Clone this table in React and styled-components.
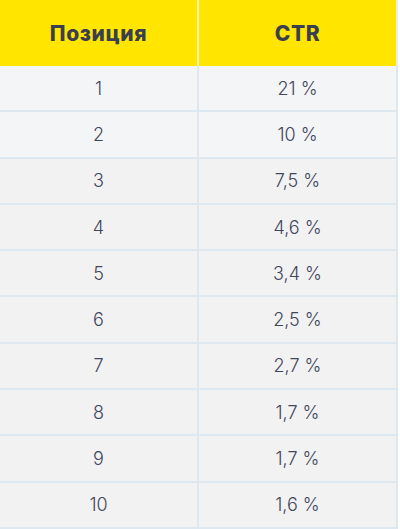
import React from 'react'
import styled, { createGlobalStyle } from 'styled-components'

const rows = [
  ['1', '21 %'],
  ['2', '10 %'],
  ['3', '7,5 %'],
  ['4', '4,6 %'],
  ['5', '3,4 %'],
  ['6', '2,5 %'],
  ['7', '2,7 %'],
  ['8', '1,7 %'],
  ['9', '1,7 %'],
  ['10', '1,6 %'],
]

const App = () => {
  return (
    <>
      <GlobalStyle />
      <Table>
        <HeadRow>
          <HeadCell>Позиция</HeadCell>
          <HeadCell last>CTR</HeadCell>
        </HeadRow>
        {rows.map(([pos, ctr], i) => (
          <Row key={pos} tinted={i < 2}>
            <Cell>{pos}</Cell>
            <Cell last>{ctr}</Cell>
          </Row>
        ))}
      </Table>
    </>
  )
}

const GlobalStyle = createGlobalStyle`
  body {
    margin: 0;
    background: #ffffff;
    font-family: Inter, 'Noto Sans', sans-serif;
  }
`

const Table = styled.div`
  width: 398px;
  display: flex;
  flex-direction: column;
`

const HeadRow = styled.div`
  display: grid;
  grid-template-columns: 199px 199px;
  height: 66px;
  background: #ffe500;
`

const HeadCell = styled.div`
  display: flex;
  align-items: center;
  justify-content: center;
  padding-top: 1px;
  font-size: 21px;
  font-weight: 800;
  letter-spacing: 0.6px;
  color: #3a3f50;
  border-right: 2px solid ${p => (p.last ? '#e6edf4' : '#fff6b0')};
`

const Row = styled.div`
  display: grid;
  grid-template-columns: 199px 199px;
  height: 46.3px;
  box-sizing: border-box;
  border-bottom: 2px solid #dde8f1;
  background: ${p => (p.tinted ? '#f4f5f7' : '#f2f2f2')};
`

const Cell = styled.div`
  display: flex;
  align-items: center;
  justify-content: center;
  font-size: 18px;
  font-weight: 300;
  color: #41465a;
  border-right: 2px solid #dde8f1;
`

export default App
